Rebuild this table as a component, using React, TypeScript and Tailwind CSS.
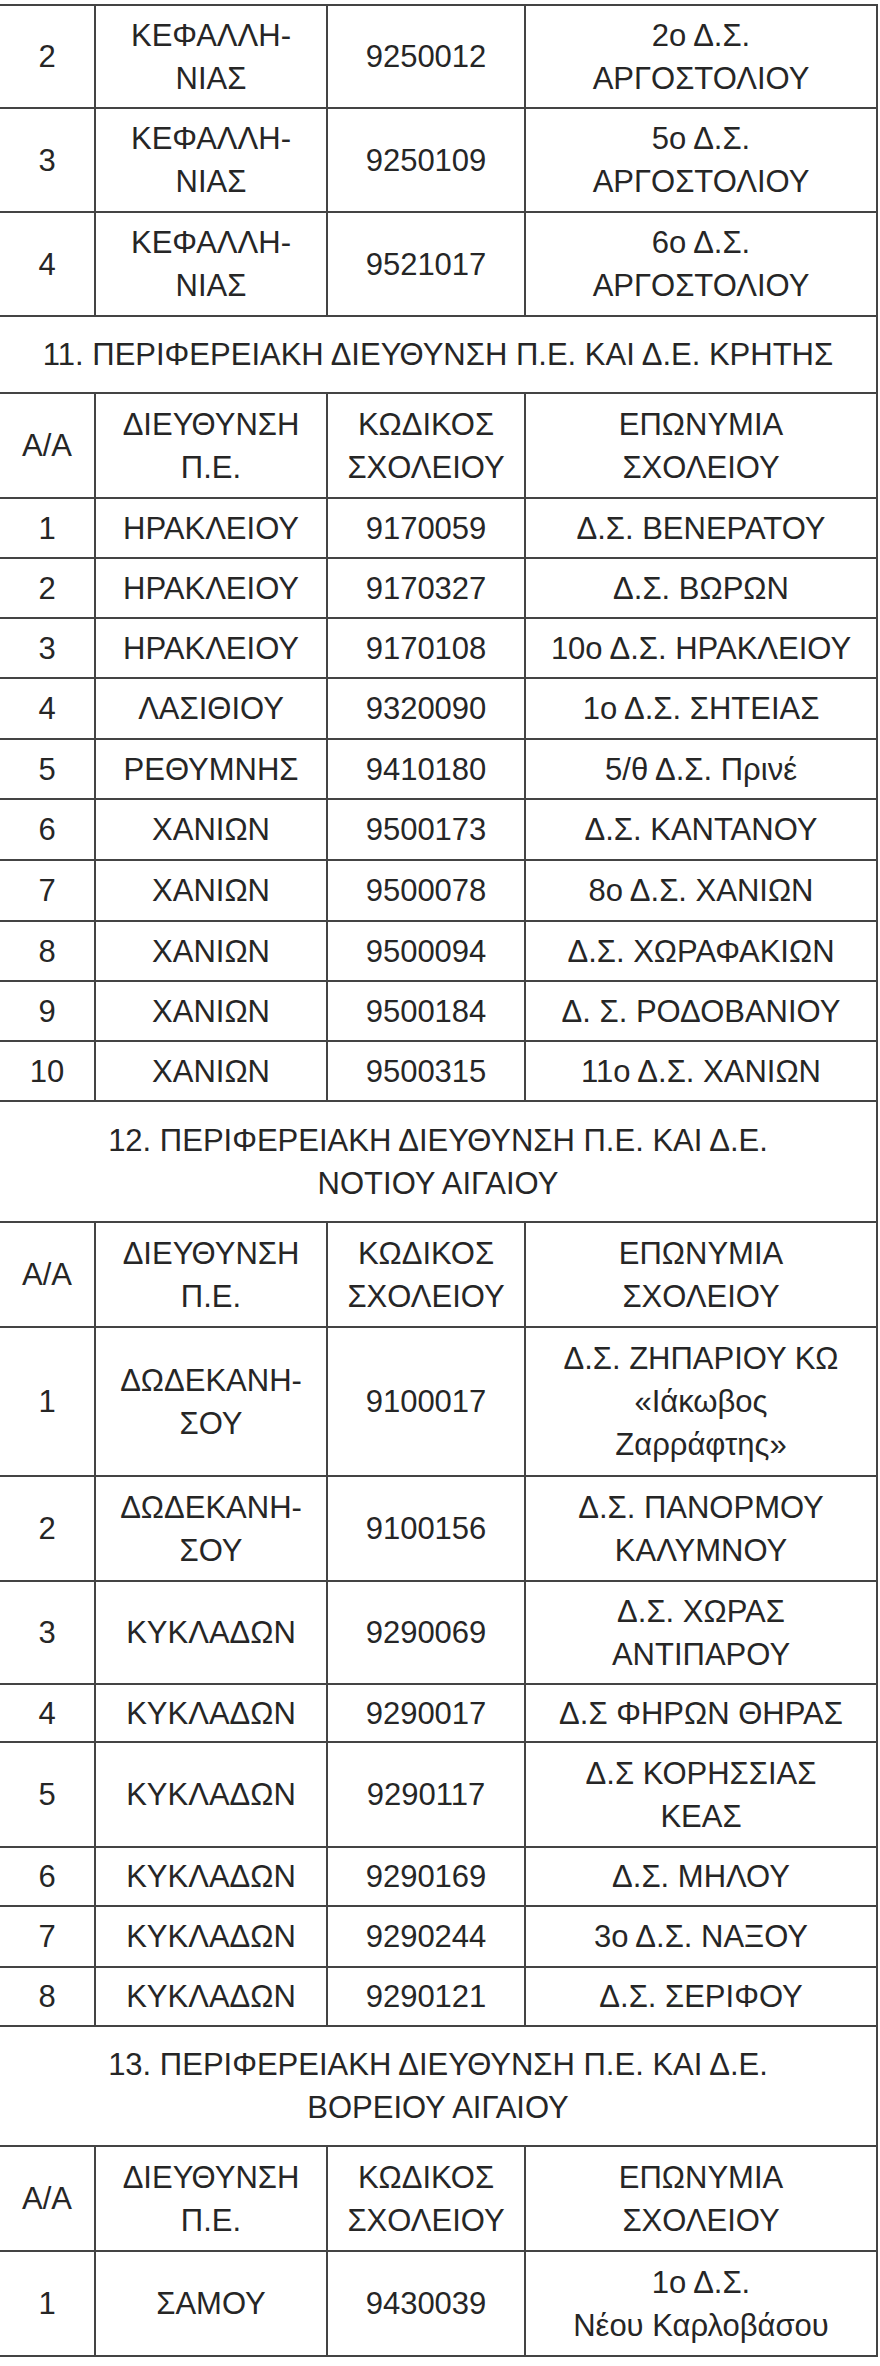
type Row = { n: string; dir: string[]; code: string; name: string[]; h: string }

type Block =
  | { kind: 'section'; lines: string[]; h: string }
  | { kind: 'head' }
  | { kind: 'row'; row: Row }

const r = (n: string, dir: string[], code: string, name: string[], h = 'h-[60px]'): Block => ({
  kind: 'row',
  row: { n, dir, code, name, h },
})

const blocks: Block[] = [
  r('2', ['ΚΕΦΑΛΛΗ-', 'ΝΙΑΣ'], '9250012', ['2ο Δ.Σ.', 'ΑΡΓΟΣΤΟΛΙΟΥ'], 'h-[103px]'),
  r('3', ['ΚΕΦΑΛΛΗ-', 'ΝΙΑΣ'], '9250109', ['5ο Δ.Σ.', 'ΑΡΓΟΣΤΟΛΙΟΥ'], 'h-[104px]'),
  r('4', ['ΚΕΦΑΛΛΗ-', 'ΝΙΑΣ'], '9521017', ['6ο Δ.Σ.', 'ΑΡΓΟΣΤΟΛΙΟΥ'], 'h-[104px]'),
  { kind: 'section', lines: ['11. ΠΕΡΙΦΕΡΕΙΑΚΗ ΔΙΕΥΘΥΝΣΗ Π.Ε. ΚΑΙ Δ.Ε. ΚΡΗΤΗΣ'], h: 'h-[77px]' },
  { kind: 'head' },
  r('1', ['ΗΡΑΚΛΕΙΟΥ'], '9170059', ['Δ.Σ. ΒΕΝΕΡΑΤΟΥ']),
  r('2', ['ΗΡΑΚΛΕΙΟΥ'], '9170327', ['Δ.Σ. ΒΩΡΩΝ']),
  r('3', ['ΗΡΑΚΛΕΙΟΥ'], '9170108', ['10ο Δ.Σ. ΗΡΑΚΛΕΙΟΥ']),
  r('4', ['ΛΑΣΙΘΙΟΥ'], '9320090', ['1ο Δ.Σ. ΣΗΤΕΙΑΣ'], 'h-[61px]'),
  r('5', ['ΡΕΘΥΜΝΗΣ'], '9410180', ['5/θ Δ.Σ. Πρινέ']),
  r('6', ['ΧΑΝΙΩΝ'], '9500173', ['Δ.Σ. ΚΑΝΤΑΝΟΥ'], 'h-[61px]'),
  r('7', ['ΧΑΝΙΩΝ'], '9500078', ['8ο Δ.Σ. ΧΑΝΙΩΝ'], 'h-[61px]'),
  r('8', ['ΧΑΝΙΩΝ'], '9500094', ['Δ.Σ. ΧΩΡΑΦΑΚΙΩΝ']),
  r('9', ['ΧΑΝΙΩΝ'], '9500184', ['Δ. Σ. ΡΟΔΟΒΑΝΙΟΥ']),
  r('10', ['ΧΑΝΙΩΝ'], '9500315', ['11ο Δ.Σ. ΧΑΝΙΩΝ']),
  { kind: 'section', lines: ['12. ΠΕΡΙΦΕΡΕΙΑΚΗ ΔΙΕΥΘΥΝΣΗ Π.Ε. ΚΑΙ Δ.Ε.', 'ΝΟΤΙΟΥ ΑΙΓΑΙΟΥ'], h: 'h-[121px]' },
  { kind: 'head' },
  r('1', ['ΔΩΔΕΚΑΝΗ-', 'ΣΟΥ'], '9100017', ['Δ.Σ. ΖΗΠΑΡΙΟΥ ΚΩ', '«Ιάκωβος', 'Ζαρράφτης»'], 'h-[149px]'),
  r('2', ['ΔΩΔΕΚΑΝΗ-', 'ΣΟΥ'], '9100156', ['Δ.Σ. ΠΑΝΟΡΜΟΥ', 'ΚΑΛΥΜΝΟΥ'], 'h-[105px]'),
  r('3', ['ΚΥΚΛΑΔΩΝ'], '9290069', ['Δ.Σ. ΧΩΡΑΣ', 'ΑΝΤΙΠΑΡΟΥ'], 'h-[103px]'),
  r('4', ['ΚΥΚΛΑΔΩΝ'], '9290017', ['Δ.Σ ΦΗΡΩΝ ΘΗΡΑΣ'], 'h-[58px]'),
  r('5', ['ΚΥΚΛΑΔΩΝ'], '9290117', ['Δ.Σ ΚΟΡΗΣΣΙΑΣ', 'ΚΕΑΣ'], 'h-[105px]'),
  r('6', ['ΚΥΚΛΑΔΩΝ'], '9290169', ['Δ.Σ. ΜΗΛΟΥ'], 'h-[59px]'),
  r('7', ['ΚΥΚΛΑΔΩΝ'], '9290244', ['3ο Δ.Σ. ΝΑΞΟΥ'], 'h-[61px]'),
  r('8', ['ΚΥΚΛΑΔΩΝ'], '9290121', ['Δ.Σ. ΣΕΡΙΦΟΥ'], 'h-[59px]'),
  { kind: 'section', lines: ['13. ΠΕΡΙΦΕΡΕΙΑΚΗ ΔΙΕΥΘΥΝΣΗ Π.Ε. ΚΑΙ Δ.Ε.', 'ΒΟΡΕΙΟΥ ΑΙΓΑΙΟΥ'], h: 'h-[120px]' },
  { kind: 'head' },
  r('1', ['ΣΑΜΟΥ'], '9430039', ['1ο Δ.Σ.', 'Νέου Καρλοβάσου'], 'h-[105px]'),
]

const cell = 'border-2 border-[#444444] px-1 text-center align-middle whitespace-nowrap'

function Lines({ lines }: { lines: string[] }) {
  return (
    <>
      {lines.map((l, i) => (
        <span key={i} className="block">
          {l}
        </span>
      ))}
    </>
  )
}

export default function App() {
  return (
    <div className="w-[880px] min-h-[2366px] bg-white pt-[4px]">
      <table
        className="w-[877px] table-fixed border-collapse text-[31px] leading-[43px] text-[#262626]"
        style={{ fontFamily: '"Liberation Sans", Arial, sans-serif' }}
      >
        <colgroup>
          <col className="w-[95px]" />
          <col className="w-[232px]" />
          <col className="w-[198px]" />
          <col className="w-[352px]" />
        </colgroup>
        <tbody>
          {blocks.map((b, i) => {
            if (b.kind === 'section') {
              return (
                <tr key={i} className={b.h}>
                  <td colSpan={4} className={`${cell} border-l-0`}>
                    <Lines lines={b.lines} />
                  </td>
                </tr>
              )
            }
            if (b.kind === 'head') {
              return (
                <tr key={i} className="h-[105px]">
                  <td className={`${cell} border-l-0`}>Α/Α</td>
                  <td className={cell}>
                    <Lines lines={['ΔΙΕΥΘΥΝΣΗ', 'Π.Ε.']} />
                  </td>
                  <td className={cell}>
                    <Lines lines={['ΚΩΔΙΚΟΣ', 'ΣΧΟΛΕΙΟΥ']} />
                  </td>
                  <td className={cell}>
                    <Lines lines={['ΕΠΩΝΥΜΙΑ', 'ΣΧΟΛΕΙΟΥ']} />
                  </td>
                </tr>
              )
            }
            const row = b.row
            return (
              <tr key={i} className={row.h}>
                <td className={`${cell} border-l-0`}>{row.n}</td>
                <td className={cell}>
                  <Lines lines={row.dir} />
                </td>
                <td className={cell}>{row.code}</td>
                <td className={cell}>
                  <Lines lines={row.name} />
                </td>
              </tr>
            )
          })}
        </tbody>
      </table>
    </div>
  )
}
